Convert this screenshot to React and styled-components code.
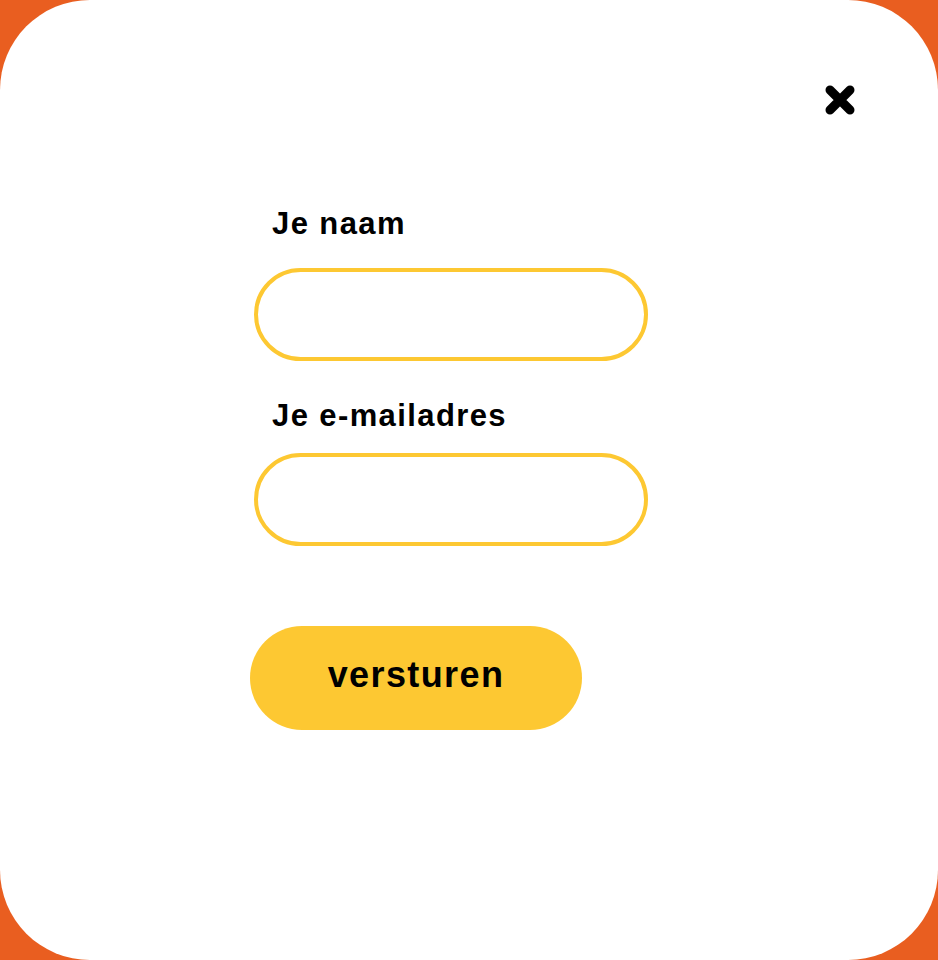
import React from 'react';
import styled, { createGlobalStyle } from 'styled-components';

const GlobalStyle = createGlobalStyle`
  html, body {
    margin: 0;
    padding: 0;
    background: #e95e20;
  }
  * {
    box-sizing: border-box;
  }
`;

const Card = styled.div`
  position: relative;
  width: 938px;
  height: 960px;
  background: #fff;
  border-radius: 90px;
  padding: 206px 0 0 250px;
  font-family: "Liberation Sans", Arial, sans-serif;
`;

const CloseButton = styled.button`
  position: absolute;
  top: 85px;
  left: 824px;
  width: 32px;
  height: 30px;
  padding: 0;
  border: none;
  background: none;
  cursor: pointer;
  display: flex;
  align-items: center;
  justify-content: center;
`;

const Form = styled.form`
  display: flex;
  flex-direction: column;
  align-items: flex-start;
  width: 400px;
`;

const Label = styled.label`
  display: block;
  padding-left: 22px;
  font-size: 31px;
  font-weight: 700;
  letter-spacing: 1.4px;
  color: #000;
  margin-top: ${({ top }) => top || 0}px;
  margin-bottom: ${({ gap }) => gap}px;
`;

const Input = styled.input`
  width: 394px;
  height: 93px;
  margin-left: 4px;
  border: 4.5px solid #fdc832;
  border-radius: 47px;
  background: #fff;
  outline: none;
  padding: 0 30px;
  font-family: inherit;
  font-size: 24px;
`;

const Submit = styled.button`
  margin-top: 80px;
  width: 332px;
  height: 104px;
  padding: 0 0 7px;
  border: none;
  border-radius: 52px;
  background: #fdc832;
  color: #000;
  font-family: inherit;
  font-size: 36px;
  font-weight: 700;
  letter-spacing: 1.4px;
  cursor: pointer;
`;

const CloseIcon = () => (
  <svg width="32" height="30" viewBox="0 0 32 30">
    <path d="M6 5 L26 25 M26 5 L6 25" stroke="#000" strokeWidth="9" strokeLinecap="round" />
  </svg>
);

const App = () => {
  return (
    <>
      <GlobalStyle />
      <Card>
        <CloseButton aria-label="Sluiten">
          <CloseIcon />
        </CloseButton>
        <Form onSubmit={(e) => e.preventDefault()}>
          <Label htmlFor="naam" gap={26}>Je naam</Label>
          <Input id="naam" type="text" />
          <Label htmlFor="email" top={37} gap={19}>Je e-mailadres</Label>
          <Input id="email" type="email" />
          <Submit type="submit">versturen</Submit>
        </Form>
      </Card>
    </>
  );
};

export default App;
